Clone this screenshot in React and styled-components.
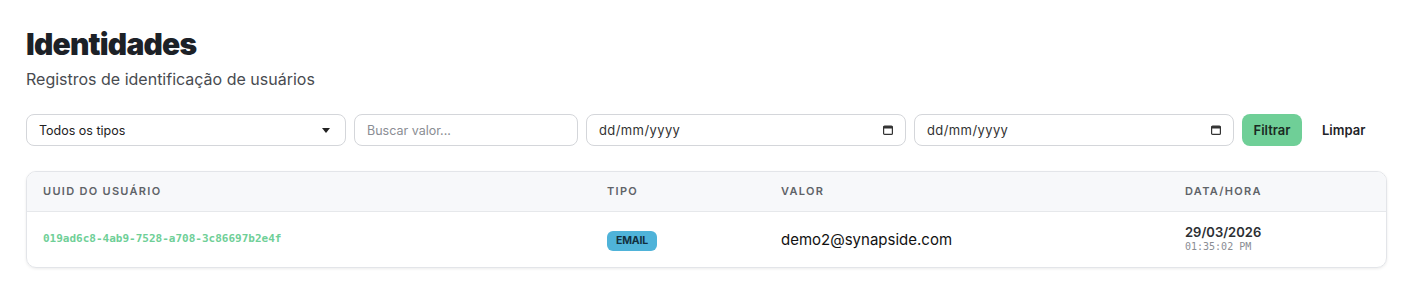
import React from 'react';
import styled, { createGlobalStyle } from 'styled-components';

const GlobalStyle = createGlobalStyle`
  body {
    margin: 0;
    background: #ffffff;
    font-family: Inter, "Noto Sans", sans-serif;
    color: #1f2328;
  }
`;

const Page = styled.div`
  padding: 26px 26px 20px;
`;

const Title = styled.h1`
  margin: 0;
  font-size: 30px;
  line-height: 36px;
  font-weight: 900;
  letter-spacing: -0.8px;
  color: #1c2127;
`;

const Subtitle = styled.p`
  margin: 6px 0 0;
  font-size: 16px;
  line-height: 22px;
  color: #484b50;
`;

const Filters = styled.div`
  display: flex;
  align-items: center;
  gap: 8px;
  margin-top: 24px;
`;

const Field = styled.div`
  box-sizing: border-box;
  width: ${(p) => p.$width}px;
  height: 32px;
  display: flex;
  align-items: center;
  justify-content: space-between;
  padding: 0 12px 0 12px;
  border: 1px solid #d4d6da;
  border-radius: 8px;
  background: #fff;
  font-size: 12.5px;
  color: ${(p) => (p.$muted ? '#8a8d93' : '#222')};
`;

const DateText = styled.span`
  font-size: 13px;
  letter-spacing: 0.4px;
  color: #333;
`;

const Caret = styled.span`
  width: 0;
  height: 0;
  margin-right: 3px;
  border-left: 4px solid transparent;
  border-right: 4px solid transparent;
  border-top: 5px solid #222;
`;

const FilterButton = styled.button`
  width: 60px;
  height: 32px;
  padding: 0;
  border: none;
  border-radius: 8px;
  background: #6fcf97;
  color: #1a2a22;
  font-family: inherit;
  font-size: 13px;
  font-weight: 600;
  cursor: pointer;
`;

const ClearButton = styled.button`
  height: 32px;
  padding: 0 12px;
  border: none;
  background: transparent;
  color: #1f2328;
  font-family: inherit;
  font-size: 13px;
  font-weight: 600;
  cursor: pointer;
`;

const Card = styled.div`
  margin-top: 25px;
  width: 1359px;
  border: 1px solid #e3e5e9;
  border-radius: 10px;
  overflow: hidden;
  box-shadow: 0 1px 3px rgba(0, 0, 0, 0.08);
`;

const Table = styled.table`
  width: 100%;
  border-collapse: collapse;
  table-layout: fixed;
`;

const Th = styled.th`
  box-sizing: border-box;
  width: ${(p) => (p.$width ? `${p.$width}px` : 'auto')};
  height: 39px;
  padding: 0 16px;
  text-align: left;
  background: #f7f8fa;
  border-bottom: 1px solid #e6e8eb;
  font-size: 11px;
  font-weight: 600;
  letter-spacing: 1.3px;
  text-transform: uppercase;
  color: #5f6368;
`;

const Td = styled.td`
  height: 55px;
  padding: 0 16px;
  vertical-align: middle;
`;

const Uuid = styled.span`
  font-family: "DejaVu Sans Mono", "Liberation Mono", monospace;
  font-size: 11px;
  font-weight: 700;
  color: #6fcf97;
  position: relative;
  top: -3px;
`;

const Badge = styled.span`
  display: inline-block;
  padding: 3px 9px;
  border-radius: 6px;
  background: #4fb3d9;
  color: #12303f;
  font-size: 10.5px;
  font-weight: 700;
  letter-spacing: -0.2px;
  line-height: 14px;
`;

const Value = styled.span`
  font-size: 15px;
  color: #111;
`;

const DateMain = styled.div`
  font-size: 13px;
  font-weight: 600;
  color: #2c2f33;
  line-height: 16px;
`;

const TimeText = styled.div`
  font-family: "DejaVu Sans Mono", "Liberation Mono", monospace;
  font-size: 10px;
  color: #8a8d93;
  line-height: 14px;
`;

const CalendarIcon = () => (
  <svg width="10" height="10" viewBox="0 0 10 10">
    <rect x="0.6" y="1.1" width="8.8" height="8.3" rx="1" fill="none" stroke="#333" strokeWidth="1.2" />
    <rect x="0.6" y="1.1" width="8.8" height="2.4" fill="#333" />
  </svg>
);

export default function App() {
  const rows = [
    {
      uuid: '019ad6c8-4ab9-7528-a708-3c86697b2e4f',
      tipo: 'EMAIL',
      valor: 'demo2@synapside.com',
      data: '29/03/2026',
      hora: '01:35:02 PM',
    },
  ];

  return (
    <Page>
      <GlobalStyle />
      <Title>Identidades</Title>
      <Subtitle>Registros de identificação de usuários</Subtitle>

      <Filters>
        <Field $width={320}>
          <span>Todos os tipos</span>
          <Caret />
        </Field>
        <Field $width={224} $muted>
          Buscar valor...
        </Field>
        <Field $width={320}>
          <DateText>dd/mm/yyyy</DateText>
          <CalendarIcon />
        </Field>
        <Field $width={320}>
          <DateText>dd/mm/yyyy</DateText>
          <CalendarIcon />
        </Field>
        <FilterButton>Filtrar</FilterButton>
        <ClearButton>Limpar</ClearButton>
      </Filters>

      <Card>
        <Table>
          <thead>
            <tr>
              <Th $width={564}>UUID do usuário</Th>
              <Th $width={174}>Tipo</Th>
              <Th $width={404}>Valor</Th>
              <Th>Data/Hora</Th>
            </tr>
          </thead>
          <tbody>
            {rows.map((r) => (
              <tr key={r.uuid}>
                <Td><Uuid>{r.uuid}</Uuid></Td>
                <Td><Badge>{r.tipo}</Badge></Td>
                <Td><Value>{r.valor}</Value></Td>
                <Td>
                  <DateMain>{r.data}</DateMain>
                  <TimeText>{r.hora}</TimeText>
                </Td>
              </tr>
            ))}
          </tbody>
        </Table>
      </Card>
    </Page>
  );
}
